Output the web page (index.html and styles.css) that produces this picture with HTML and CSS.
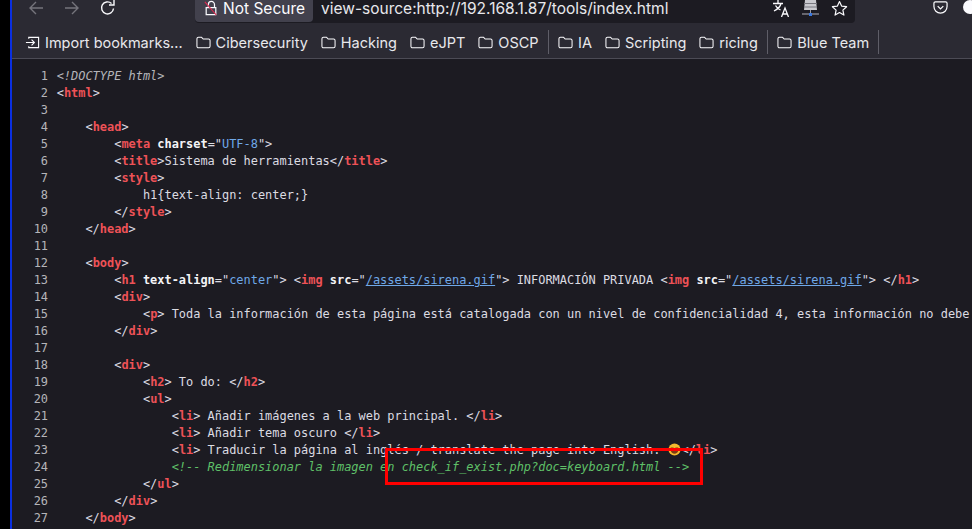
FILE: index.html
```html
<!DOCTYPE html>
<html lang="es">
<head>
<meta charset="UTF-8">
<title>view-source</title>
<link rel="stylesheet" href="styles.css">
</head>
<body>
<svg class="defs" width="0" height="0" aria-hidden="true"><defs>
<symbol id="folder" viewBox="0 0 16 16"><path d="M1 4.200C1 3 1.800 2.500 2.600 2.500H6l1.600 1.800h5.800c.9 0 1.600.7 1.600 1.600v6.200c0 .9-.7 1.600-1.600 1.600H2.600c-.9 0-1.600-.7-1.600-1.600z" fill="none" stroke="#fbfbfe" stroke-width="1.100" stroke-linejoin="round"/></symbol>
</defs></svg>
<div class="edge"></div>
<div class="browser">
  <header class="toolbar">
    <div class="nav">
      <svg class="nav-ic dim" viewBox="0 0 16 16"><path d="M15 8H2M8 2 2 8l6 6" fill="none" stroke="currentColor" stroke-width="1.400"/></svg>
      <svg class="nav-ic dim" viewBox="0 0 16 16"><path d="M1 8h13M8 2l6 6-6 6" fill="none" stroke="currentColor" stroke-width="1.400"/></svg>
      <svg class="nav-ic" viewBox="0 0 16 16"><path d="M13.500 8.500A6 6 0 1 1 11.500 3.400M14 0v5h-5" fill="none" stroke="currentColor" stroke-width="1.400"/></svg>
    </div>
    <div class="urlbar">
      <div class="identity">
        <svg class="lock" viewBox="0 0 16 18"><path d="M5 8V5a3.500 3.500 0 0 1 7 0v3M2.500 8.500h11v8h-11z" fill="none" stroke="#fbfbfe" stroke-width="1.400"/><path d="M1 2l13 15" stroke="#e22850" stroke-width="1.300"/></svg>
        <span>Not Secure</span>
      </div>
      <div class="url">view-source:http://192.168.1.87/tools/index.html</div>
      <div class="url-icons">
        <svg class="u-ic" viewBox="0 0 17 17"><path d="M0 3.500h10M5 0v3.500M8 3.500c-.6 3-3 5.500-7 7.500M2.500 5.500c1 2 3 3.500 5 4.500M8.500 17l3.500-9 3.500 9M9.800 14h4.400" fill="none" stroke="#fbfbfe" stroke-width="1.300"/></svg>
        <svg class="u-ic" viewBox="0 0 17 17"><path d="M3 0h11l1 10H2z" fill="#c9c9cf"/><path d="M2 3.500h13M2 7h13" stroke="#77777f"/><path d="M0 14h17" stroke="#9a9aa2" stroke-width="1.200"/><path d="M8.500 10v4" stroke="#9a9aa2"/><rect x="7" y="13" width="3" height="3" fill="#3a78e0"/></svg>
        <svg class="u-ic" viewBox="0 0 17 17"><path d="M8.500 1.500l2.100 4.600 5 .6-3.700 3.400 1 5-4.400-2.500-4.400 2.500 1-5L1.400 6.700l5-.6z" fill="none" stroke="#fbfbfe" stroke-width="1.200" stroke-linejoin="round"/></svg>
      </div>
    </div>
    <div class="tools">
      <svg class="pocket" viewBox="0 0 16 16"><path d="M2.500 2h11c.8 0 1.500.6 1.500 1.500V7a7 7 0 0 1-14 0V3.500C1 2.600 1.700 2 2.500 2z" fill="none" stroke="#fbfbfe" stroke-width="1.300"/><path d="M5 6.500l3 3 3-3" fill="none" stroke="#fbfbfe" stroke-width="1.300"/></svg>
      <span class="avatar"></span>
    </div>
  </header>
  <nav class="bookmarks">
    <div class="bm first">
      <svg class="ic" viewBox="0 0 16 16"><path d="M1 8h9M7 5l3 3-3 3M4 4V2.500h10.500v11H4V12" fill="none" stroke="#fbfbfe" stroke-width="1.200"/></svg>
      <span>Import bookmarks...</span>
    </div>
    <div class="bm"><svg class="ic"><use href="#folder"/></svg><span>Cibersecurity</span></div>
    <div class="bm"><svg class="ic"><use href="#folder"/></svg><span>Hacking</span></div>
    <div class="bm"><svg class="ic"><use href="#folder"/></svg><span>eJPT</span></div>
    <div class="bm"><svg class="ic"><use href="#folder"/></svg><span>OSCP</span></div>
    <i class="sep"></i>
    <div class="bm"><svg class="ic"><use href="#folder"/></svg><span>IA</span></div>
    <div class="bm"><svg class="ic"><use href="#folder"/></svg><span>Scripting</span></div>
    <div class="bm"><svg class="ic"><use href="#folder"/></svg><span>ricing</span></div>
    <i class="sep"></i>
    <div class="bm"><svg class="ic"><use href="#folder"/></svg><span>Blue Team</span></div>
    <i class="sep"></i>
  </nav>
  <main class="source">
    <div class="line"><span class="n">1</span><code class="doc">&lt;!DOCTYPE html&gt;</code></div>
    <div class="line"><span class="n">2</span><code>&lt;<b>html</b>&gt;</code></div>
    <div class="line"><span class="n">3</span><code></code></div>
    <div class="line"><span class="n">4</span><code>    &lt;<b>head</b>&gt;</code></div>
    <div class="line"><span class="n">5</span><code>        &lt;<b>meta</b> <em>charset</em>="<u>UTF-8</u>"&gt;</code></div>
    <div class="line"><span class="n">6</span><code>        &lt;<b>title</b>&gt;Sistema de herramientas&lt;/<b>title</b>&gt;</code></div>
    <div class="line"><span class="n">7</span><code>        &lt;<b>style</b>&gt;</code></div>
    <div class="line"><span class="n">8</span><code>            h1{text-align: center;}</code></div>
    <div class="line"><span class="n">9</span><code>        &lt;/<b>style</b>&gt;</code></div>
    <div class="line"><span class="n">10</span><code>    &lt;/<b>head</b>&gt;</code></div>
    <div class="line"><span class="n">11</span><code></code></div>
    <div class="line"><span class="n">12</span><code>    &lt;<b>body</b>&gt;</code></div>
    <div class="line"><span class="n">13</span><code>        &lt;<b>h1</b> <em>text-align</em>="<u>center</u>"&gt; &lt;<b>img</b> <em>src</em>="<a>/assets/sirena.gif</a>"&gt; INFORMACIÓN PRIVADA &lt;<b>img</b> <em>src</em>="<a>/assets/sirena.gif</a>"&gt; &lt;/<b>h1</b>&gt;</code></div>
    <div class="line"><span class="n">14</span><code>        &lt;<b>div</b>&gt;</code></div>
    <div class="line"><span class="n">15</span><code>            &lt;<b>p</b>&gt; Toda la información de esta página está catalogada con un nivel de confidencialidad 4, esta información no debe</code></div>
    <div class="line"><span class="n">16</span><code>        &lt;/<b>div</b>&gt;</code></div>
    <div class="line"><span class="n">17</span><code></code></div>
    <div class="line"><span class="n">18</span><code>        &lt;<b>div</b>&gt;</code></div>
    <div class="line"><span class="n">19</span><code>            &lt;<b>h2</b>&gt; To do: &lt;/<b>h2</b>&gt;</code></div>
    <div class="line"><span class="n">20</span><code>            &lt;<b>ul</b>&gt;</code></div>
    <div class="line"><span class="n">21</span><code>                &lt;<b>li</b>&gt; Añadir imágenes a la web principal. &lt;/<b>li</b>&gt;</code></div>
    <div class="line"><span class="n">22</span><code>                &lt;<b>li</b>&gt; Añadir tema oscuro &lt;/<b>li</b>&gt;</code></div>
    <div class="line"><span class="n">23</span><code>                &lt;<b>li</b>&gt; Traducir la página al inglés / translate the page into English. <svg class="emoji" viewBox="0 0 14 14"><circle cx="7" cy="7" r="6.500" fill="#f4b82e"/><path d="M3 5.500h3M8 5.500h3" stroke="#6b4a12" stroke-width="1.200"/><path d="M3 8h8c0 2-2 3.500-4 3.500S3 10 3 8z" fill="#7a3b12"/></svg>&lt;/<b>li</b>&gt;</code></div>
    <div class="line"><span class="n">24</span><code class="comment">                &lt;!-- Redimensionar la imagen en check_if_exist.php?doc=keyboard.html --&gt;</code></div>
    <div class="line"><span class="n">25</span><code>            &lt;/<b>ul</b>&gt;</code></div>
    <div class="line"><span class="n">26</span><code>        &lt;/<b>div</b>&gt;</code></div>
    <div class="line"><span class="n">27</span><code>    &lt;/<b>body</b>&gt;</code></div>
    <div class="highlight"></div>
  </main>
</div>
</body>
</html>
```
FILE: styles.css
```css
* { box-sizing: border-box; }
html, body { margin: 0; height: 100%; }
body { display: flex; width: 972px; height: 529px; overflow: hidden; background: #000; font-family: Inter, "Liberation Sans", sans-serif; color: #fbfbfe; }
.defs { position: absolute; }
.edge { width: 12px; flex: none; background: #000; border-right: 2px solid #0a2fe0; }
.browser { flex: 1; min-width: 0; display: flex; flex-direction: column; background: #2b2a33; }
.toolbar { height: 24px; flex: none; display: flex; overflow: hidden; }
.nav { width: 183px; display: flex; align-items: flex-start; padding: 0 0 0 16px; gap: 20px; }
.nav-ic { width: 16px; height: 16px; flex: none; color: #fbfbfe; }
.nav-ic.dim { color: #75747c; }
.urlbar { width: 660px; height: 23px; display: flex; background: #1c1b22; border-radius: 0 0 4px 4px; font-size: 15.500px; line-height: 17px; }
.identity { width: 118px; height: 22px; flex: none; display: flex; gap: 5px; padding-left: 9px; background: #42414d; border-radius: 0 0 4px 4px; }
.lock { width: 14px; height: 16px; flex: none; }
.url { flex: 1; padding-left: 8px; white-space: nowrap; color: #e8e8ec; }
.url-icons { display: flex; gap: 12px; padding-right: 7px; }
.u-ic { width: 17px; height: 17px; flex: none; }
.tools { flex: 1; display: flex; justify-content: flex-end; gap: 15px; margin-right: -5px; }
.pocket { width: 15px; height: 15px; }
.avatar { width: 14px; height: 14px; border-radius: 50%; background: #fbfbfe; }
.bookmarks { height: 35px; flex: none; display: flex; align-items: center; padding: 2px 0 0 13px; border-bottom: 1px solid #4c4b55; font-size: 14.500px; gap: 13px; color: #e8e8ec; }
.bm { display: flex; align-items: center; gap: 5px; white-space: nowrap; }
.ic { width: 15px; height: 15px; flex: none; }
.sep { width: 1px; height: 24px; margin: 0 -3.500px 0 -4px; background: #5f5e68; }
.source { flex: 1; min-height: 0; position: relative; background: #1c1b22; overflow: hidden; font-family: "DejaVu Sans Mono", monospace; font-size: 11.940px; padding-top: 8.500px; color: #dcdce2; }
.line { display: flex; height: 17.040px; line-height: 17px; white-space: pre; }
.n { width: 36px; flex: none; text-align: right; color: #b5b5ba; }
code { font: inherit; margin-left: 8.700px; }
b { color: #ee5257; font-weight: 700; }
em { font-style: normal; font-weight: 700; color: #f4f4f6; }
u { text-decoration: none; color: #6fa8e8; }
a { text-decoration: underline; color: #6fa8e8; }
.doc { font-style: italic; color: #b5b5ba; }
.comment { font-style: italic; color: #5fc068; }
.emoji { width: 13px; height: 13px; vertical-align: -2px; margin-right: 1px; }
.highlight { position: absolute; left: 373px; top: 389px; width: 318px; height: 37px; border: 3.500px solid #f00; }
```
